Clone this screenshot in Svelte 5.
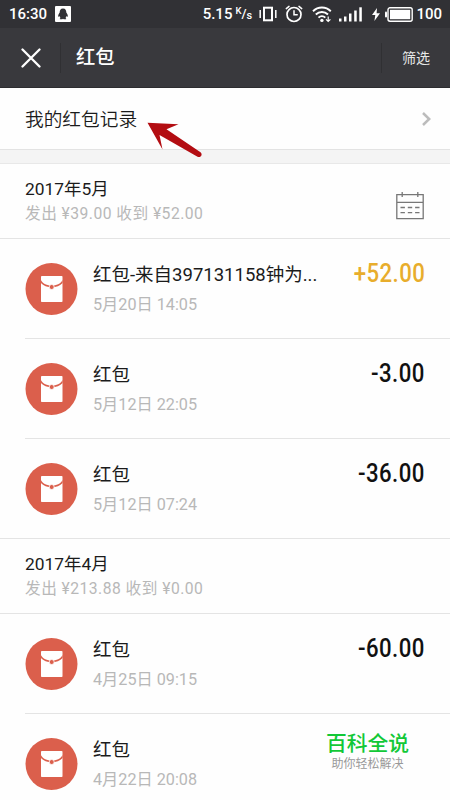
<script>
	let network = { speed: '5.15', battery: 100 };

	let months = [
		{
			title: '2017年5月',
			summary: '发出 ¥39.00 收到 ¥52.00',
			calendar: true,
			records: [
				{ name: '红包-来自397131158钟为...', time: '5月20日 14:05', amount: '+52.00' },
				{ name: '红包', time: '5月12日 22:05', amount: '-3.00' },
				{ name: '红包', time: '5月12日 07:24', amount: '-36.00' }
			]
		},
		{
			title: '2017年4月',
			summary: '发出 ¥213.88 收到 ¥0.00',
			calendar: false,
			records: [
				{ name: '红包', time: '4月25日 09:15', amount: '-60.00' },
				{ name: '红包', time: '4月22日 20:08', amount: '' }
			]
		}
	];
</script>

<div class="screen">
	<header>
		<div class="status-bar">
			<span class="clock">16:30</span>
			<svg class="notice" width="16" height="16" viewBox="0 0 16 16">
				<rect width="16" height="16" rx="1" fill="#fff" />
				<path
					d="M8 2.4c-2.5 0-3.3 1.8-3.3 4.1C3.7 7.6 3 9 3.2 10.8c.5.2 1-.3 1.3-.8.2.9.6 1.5 1.1 2-.6.3-1 .7-.7 1.2h2.4L8 12.8l.7.4h2.4c.3-.5-.1-.9-.7-1.2.5-.5.9-1.1 1.1-2 .3.5.8 1 1.3.8.2-1.8-.5-3.2-1.5-4.3 0-2.3-.8-4.1-3.3-4.1z"
					fill="#303034"
				/>
			</svg>
			<span class="speed">{network.speed}</span>
			<span class="unit"><sup>K</sup>/<sub>s</sub></span>
			<svg class="vibrate" width="18" height="16" viewBox="0 0 18 16">
				<path d="M1.2 4v8M16.8 4v8" stroke="#fff" stroke-width="1.5" />
				<rect x="5" y="1.7" width="8" height="12.6" fill="none" stroke="#fff" stroke-width="2" />
			</svg>
			<svg class="alarm" width="18" height="18" viewBox="0 0 18 18">
				<g fill="none" stroke="#fff" stroke-width="1.7" stroke-linecap="round">
					<circle cx="9" cy="9.5" r="7" />
					<path d="M9 5.8v4h3.2" stroke-width="1.5" />
					<path d="M1.3 3.6 4 1.4M16.7 3.6 14 1.4" stroke-width="1.5" />
				</g>
			</svg>
			<svg class="wifi" width="20" height="17" viewBox="0 0 20 17">
				<g fill="none" stroke="#fff" stroke-width="1.9">
					<path d="M1 5.2c5-4.9 12.8-4.9 17.8 0" />
					<path d="M3.8 8.5c3.5-3.4 8.7-3.4 12.2 0" />
					<path d="M6.5 11.6c2-2 4.8-2 6.8 0" />
				</g>
				<circle cx="9.9" cy="14.4" r="1.7" fill="#fff" />
				<path d="M16.2 10.5v5m-2.2-2.2 2.2 2.2 2.2-2.2" fill="none" stroke="#fff" stroke-width="1.2" />
			</svg>
			<svg class="signal" width="24" height="15" viewBox="0 0 24 15" fill="#fff">
				<rect x="0" y="11.5" width="2.5" height="3" />
				<rect x="5" y="9.5" width="2.5" height="5" />
				<rect x="10" y="6.5" width="2.5" height="8" />
				<rect x="15.2" y="3.5" width="2.5" height="11" />
				<rect x="20.3" y="0.3" width="2.5" height="14.2" />
			</svg>
			<svg class="bolt" width="8" height="13" viewBox="0 0 8 13">
				<path d="M5 0 0 7h3.3L2.4 13 8 5.2H4.6z" fill="#fff" />
			</svg>
			<svg class="battery" width="28" height="15" viewBox="0 0 28 15">
				<rect x="3" y=".8" width="24.2" height="13.4" rx="2" fill="none" stroke="#fff" stroke-width="1.4" />
				<rect x="5" y="2.8" width="20.2" height="9.4" fill="#fff" />
				<rect x="0" y="4.5" width="2" height="6" rx="1" fill="#fff" />
			</svg>
			<span class="percent">{network.battery}</span>
		</div>
		<nav>
			<button class="close" aria-label="关闭">
				<svg width="20" height="20" viewBox="0 0 20 20">
					<path d="M1.5 1.5l17 17M18.5 1.5l-17 17" stroke="#fff" stroke-width="2.3" stroke-linecap="round" />
				</svg>
			</button>
			<h1>红包</h1>
			<button class="filter">筛选</button>
		</nav>
	</header>

	<a class="my-records" href="#records">
		<span>我的红包记录</span>
		<svg width="9" height="14" viewBox="0 0 9 14">
			<path d="M1 1l6.2 6L1 13" fill="none" stroke="#bcbcbc" stroke-width="2.5" />
		</svg>
	</a>
	<svg class="pointer" width="56" height="38" viewBox="0 0 56 38">
		<path
			d="M.5 .8 31.500 2.300 19.500 7.300 53.500 30.300C56 32.500 54 36.200 50.500 34.800L12.500 13 15.500 27.500z"
			fill="#b30d12"
		/>
	</svg>
	<div class="band"></div>

	{#each months as month}
		<section>
			<div class="month">
				<div>
					<h2>{month.title}</h2>
					<p class="summary">{month.summary}</p>
				</div>
				{#if month.calendar}
					<svg class="calendar" width="28" height="29" viewBox="0 0 28 29">
						<g fill="none" stroke="#777" stroke-width="1.3">
							<path d="M.8 3.7h26.4v24H.8zM.8 11.3h26.4" />
							<path d="M6.2 1v5M21.8 1v5" />
							<path d="M4.5 16.5h19M4.5 21.7h19" stroke-dasharray="4.4 2.9" />
						</g>
					</svg>
				{/if}
			</div>
			{#each month.records as record}
				<div class="record">
					<svg class="packet" width="53" height="52" viewBox="0 0 53 52">
						<circle cx="26.5" cy="26" r="26" fill="#db5f4c" />
						<rect x="16" y="13" width="21.5" height="26" rx=".8" fill="#fff" />
						<path d="M15.9 17C19.5 24.5 34 24.5 37.6 17V20C33 25.6 20.5 25.6 15.9 20z" fill="#db5f4c" />
						<circle cx="26.7" cy="24" r="2.5" fill="#db5f4c" stroke="#fff" stroke-width=".8" />
					</svg>
					<div class="info">
						<div class="name">{record.name}</div>
						<div class="time">{record.time}</div>
					</div>
					{#if record.amount}
						<div class="amount" class:income={record.amount.startsWith('+')}>{record.amount}</div>
					{/if}
				</div>
			{/each}
		</section>
	{/each}

	<div class="watermark">
		<strong>百科全说</strong>
		<span>助你轻松解决</span>
	</div>
</div>

<style>
	:global(body) {
		margin: 0;
	}
	.screen {
		position: relative;
		width: 450px;
		height: 800px;
		overflow: hidden;
		background-color: #fefefe;
		font-family: Roboto, 'Noto Sans CJK SC', sans-serif;
		color: #1b1b1b;
	}
	header {
		height: 88px;
		box-sizing: border-box;
		background-color: #39393d;
		border-bottom: 1px solid #2d2d30;
		color: white;
	}
	.status-bar {
		display: flex;
		align-items: center;
		height: 28px;
		padding: 0 8px 0 9px;
		background-color: #313135;
		font-size: 15px;
		font-weight: 500;
		line-height: 28px;
		white-space: nowrap;
	}
	.clock {
		width: 46px;
	}
	.speed {
		margin-left: auto;
	}
	.unit {
		display: flex;
		width: 16px;
		margin-left: 3px;
		font-size: 13px;
		line-height: 14px;
	}
	.unit sup,
	.unit sub {
		font-size: 9.5px;
		line-height: 10px;
	}
	.unit sup {
		margin-top: -1px;
	}
	.unit sub {
		margin-top: 4px;
		font-size: 11px;
	}
	.vibrate,
	.alarm {
		margin-left: 8px;
	}
	.wifi {
		margin-left: 9px;
	}
	.signal {
		margin-left: 7px;
	}
	.bolt {
		margin-left: 9px;
	}
	.battery {
		margin-left: 5px;
	}
	.percent {
		margin-left: 3px;
	}
	nav {
		display: flex;
		align-items: center;
		height: 59px;
	}
	button {
		padding: 0;
		border: none;
		background: none;
		color: white;
		font-family: inherit;
	}
	.close {
		display: flex;
		align-items: center;
		width: 61px;
		height: 30px;
		padding-left: 21px;
		box-sizing: border-box;
		border-right: 1px solid #303033;
	}
	h1 {
		margin: 1px 0 0 15px;
		font-size: 19.3px;
		font-weight: 500;
		line-height: 28px;
	}
	.filter {
		width: 69px;
		height: 30px;
		margin-left: auto;
		border-left: 1px solid #303033;
		font-size: 14px;
		line-height: 28px;
		color: #e8e8e8;
	}
	.my-records {
		display: flex;
		align-items: center;
		justify-content: space-between;
		height: 61px;
		padding: 0 19px 0 25px;
		color: inherit;
		font-size: 18.7px;
		font-weight: 350;
		text-decoration: none;
	}
	.my-records span {
		margin-top: -2px;
	}
	.pointer {
		position: absolute;
		left: 147px;
		top: 122px;
	}
	.band {
		height: 15px;
		box-sizing: border-box;
		background-color: #f4f4f4;
		border-top: 1px solid #e3e3e3;
		border-bottom: 1px solid #e8e8e8;
	}
	.month {
		display: flex;
		justify-content: space-between;
		height: 75px;
		padding: 13px 26px 0 25px;
		box-sizing: border-box;
		border-bottom: 1px solid #e4e4e4;
	}
	h2 {
		margin: 0;
		font-size: 17.4px;
		font-weight: 400;
		line-height: 25px;
	}
	.summary {
		margin: 0;
		color: #b8b8b8;
		font-size: 15.7px;
		letter-spacing: 0.45px;
		line-height: 24px;
	}
	.calendar {
		margin-top: 14px;
	}
	.record {
		display: flex;
		height: 100px;
		margin-left: 25px;
		padding-right: 25px;
		box-sizing: border-box;
		border-bottom: 1px solid #e4e4e4;
	}
	.record:last-child {
		margin-left: 0;
		padding-left: 25px;
	}
	.packet {
		flex-shrink: 0;
		margin-top: 24px;
	}
	.info {
		margin: 22px 0 0 15px;
		white-space: nowrap;
	}
	.name {
		font-size: 18.5px;
		line-height: 29px;
	}
	.time {
		color: #b8b8b8;
		font-size: 16.2px;
		line-height: 30px;
	}
	.amount {
		margin: 19px 0 0 auto;
		color: #111;
		font-size: 25.5px;
		font-weight: 500;
		letter-spacing: 0.5px;
		line-height: 30px;
		transform: scaleX(0.87);
		transform-origin: right;
	}
	.amount.income {
		color: #e8ad2c;
	}
	.watermark {
		position: absolute;
		left: 317px;
		top: 730px;
		display: flex;
		flex-direction: column;
		align-items: center;
		width: 101px;
	}
	.watermark strong {
		color: #12c837;
		font-size: 20.8px;
		font-weight: 500;
		line-height: 28px;
	}
	.watermark span {
		color: #999;
		font-size: 12px;
		line-height: 12px;
	}
</style>
